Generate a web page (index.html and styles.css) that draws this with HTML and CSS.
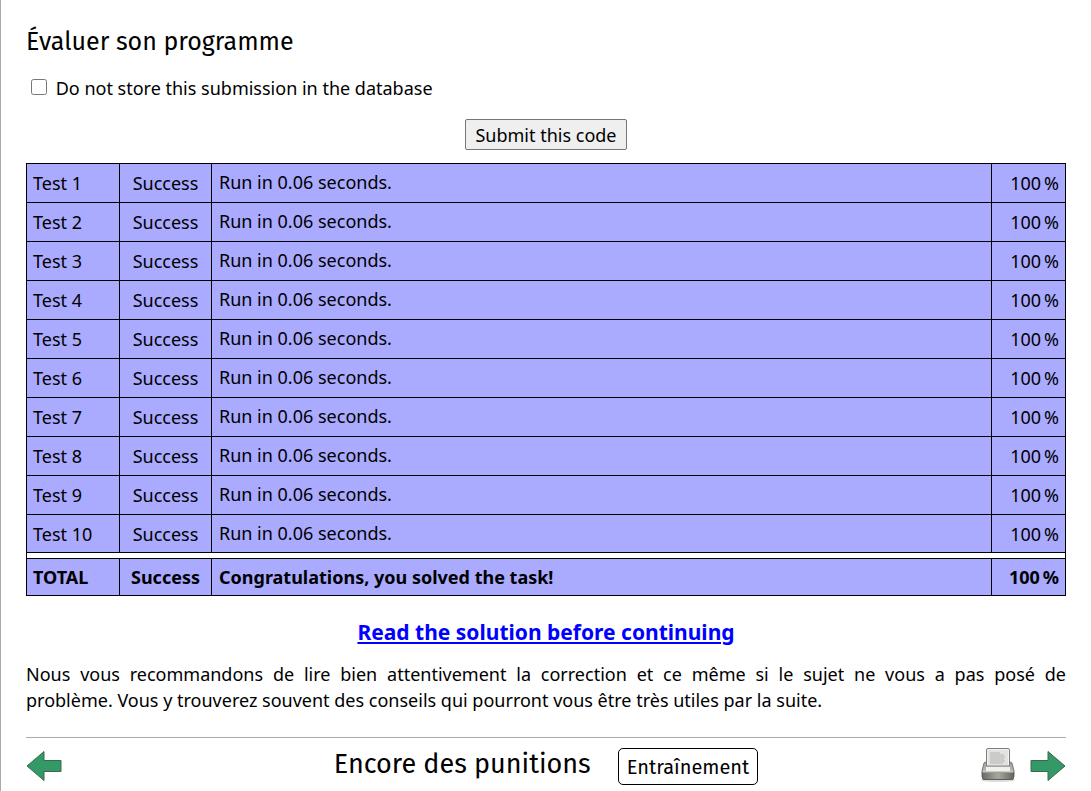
FILE: index.html
```
<!DOCTYPE html>
<html lang="fr">
<head>
<meta charset="utf-8">
<title>Évaluer son programme</title>
<link rel="stylesheet" href="styles.css">
</head>
<body>
<main>
<h2>Évaluer son programme</h2>
<form class="submission">
<label class="store"><input type="checkbox"> Do not store this submission in the database</label>
<button type="button" class="submit">Submit this code</button>
</form>
<table class="results">
<tbody class="tests">
<tr><td>Test 1</td><td class="status">Success</td><td class="message">Run in 0.06 seconds.</td><td class="score">100&#8239;%</td></tr>
<tr><td>Test 2</td><td class="status">Success</td><td class="message">Run in 0.06 seconds.</td><td class="score">100&#8239;%</td></tr>
<tr><td>Test 3</td><td class="status">Success</td><td class="message">Run in 0.06 seconds.</td><td class="score">100&#8239;%</td></tr>
<tr><td>Test 4</td><td class="status">Success</td><td class="message">Run in 0.06 seconds.</td><td class="score">100&#8239;%</td></tr>
<tr><td>Test 5</td><td class="status">Success</td><td class="message">Run in 0.06 seconds.</td><td class="score">100&#8239;%</td></tr>
<tr><td>Test 6</td><td class="status">Success</td><td class="message">Run in 0.06 seconds.</td><td class="score">100&#8239;%</td></tr>
<tr><td>Test 7</td><td class="status">Success</td><td class="message">Run in 0.06 seconds.</td><td class="score">100&#8239;%</td></tr>
<tr><td>Test 8</td><td class="status">Success</td><td class="message">Run in 0.06 seconds.</td><td class="score">100&#8239;%</td></tr>
<tr><td>Test 9</td><td class="status">Success</td><td class="message">Run in 0.06 seconds.</td><td class="score">100&#8239;%</td></tr>
<tr><td>Test 10</td><td class="status">Success</td><td class="message">Run in 0.06 seconds.</td><td class="score">100&#8239;%</td></tr>
</tbody>
<tbody class="total">
<tr class="gap"><td colspan="4"></td></tr>
<tr><td>TOTAL</td><td class="status">Success</td><td class="message">Congratulations, you solved the task!</td><td class="score">100&#8239;%</td></tr>
</tbody>
</table>
<p class="solution"><a href="#solution">Read the solution before continuing</a></p>
<p class="advice">Nous vous recommandons de lire bien attentivement la correction et ce même si le sujet ne vous a pas posé de problème.&nbsp;Vous y trouverez souvent des conseils qui pourront vous être très utiles par la suite.</p>
</main>
<footer>
<a class="previous" href="#previous" aria-label="Précédent"><svg width="36" height="32" viewBox="0 0 36 32"><path d="M1 16 18 1.500v9h17v11H18v9z" fill="#339966" stroke="#3f6653"/></svg></a>
<div class="title"><span class="chapter">Encore des punitions</span><a class="kind" href="#training">Entraînement</a></div>
<div class="tools">
<a href="#print" aria-label="Imprimer"><svg width="36" height="38" viewBox="0 0 36 38">
<defs>
<linearGradient id="body" x1="0" y1="0" x2="0" y2="1"><stop offset="0" stop-color="#a2a29e"/><stop offset="1" stop-color="#c4c4c0"/></linearGradient>
<linearGradient id="front" x1="0" y1="0" x2="1" y2="0"><stop offset="0" stop-color="#6c6c68"/><stop offset=".5" stop-color="#a8a8a2"/><stop offset="1" stop-color="#666661"/></linearGradient>
</defs>
<ellipse cx="18" cy="33" rx="17" ry="2" fill="#ddd"/>
<path d="M4 16q1-1 2-1h24q1 0 2 1l2 8v6H2v-6z" fill="url(#body)" stroke="#777773"/>
<path d="M6.500 19V3q0-1.500 1.500-1.500h20q1.500 0 1.500 1.500v16z" fill="#f2f2f0" stroke="#7d7d79"/>
<path d="M8 3h20v15H8z" fill="#e2e2e0"/>
<path d="M10 6h10M10 8h14M10 10h15M10 12h14M10 14h15M10 16h13" stroke="#b4b4b1"/>
<path d="M6 19h24v5H6z" fill="#f0f0ed"/>
<path d="M5 19.500h26" stroke="#a5a5a1"/>
<path d="M2.500 25.500h31V31q0 1.500-1.500 1.500H4q-1.500 0-1.500-1.500z" fill="url(#front)" stroke="#5c5c58"/>
<path d="M3 25h30" stroke="#deded9"/>
</svg></a>
<a href="#next" aria-label="Suivant"><svg width="36" height="32" viewBox="0 0 36 32"><path d="M35 16 18 1.500v9H1v11h17v9z" fill="#339966" stroke="#3f6653"/></svg></a>
</div>
</footer>
</body>
</html>
```
FILE: styles.css
```
* { box-sizing: border-box; }
body { min-height: 100vh; margin: 0; padding: 26px 25px 0; border-left: 1px solid #aaa; font: 18px/26px "Noto Sans", sans-serif; color: #000; background: #fff; }
h2 { margin: 0; font: 25px/32px "Fira Sans", "Noto Sans", sans-serif; }
.submission { display: flex; flex-direction: column; }
.store { margin-top: 17px; }
.store input { width: 16px; height: 16px; margin: 0 4px 0 5px; }
.submit { align-self: center; margin: 18px 0 13px; padding: 3px 9px 2px; border: 1px solid #767676; border-radius: 2px; background: #efefef; font: 18px/24px "Noto Sans", sans-serif; color: #000; }
.results { width: 100%; border-collapse: collapse; }
.results td { height: 39px; padding: 0 6px; border: 1px solid #000; background: #aaaaff; line-height: 26px; }
.results td:first-child { width: 93px; }
.results .status { width: 92px; text-align: center; }
.results .message { padding-left: 7px; }
.results .score { width: 74px; text-align: right; }
.tests .message { padding-bottom: 2px; }
.tests tr:last-child td { height: 38px; }
.results .gap td { height: 6px; padding: 0; background: #fff; }
.total { font-weight: bold; }
.total tr:last-child td { height: 37px; }
.solution { margin: 23px 0 16px; text-align: center; font-size: 21px; font-weight: bold; }
.solution a { color: #00f; }
.advice { margin: 0; text-align: justify; }
footer { display: grid; grid-template-columns: 1fr auto 1fr; align-items: center; margin-top: 24px; padding: 9px 0 6px; border-top: 1px solid #aaa; }
footer svg { display: block; }
.title, .tools { display: flex; align-items: center; }
.previous { justify-self: start; }
.title { gap: 27px; font-family: "Fira Sans", "Noto Sans", sans-serif; }
.tools { justify-self: end; gap: 14px; }
.chapter { padding-bottom: 4px; font-size: 27px; }
.kind { padding: 5px 8px 4px; border: 1px solid #000; border-radius: 5px; font-size: 20px; color: #000; text-decoration: none; }
```
